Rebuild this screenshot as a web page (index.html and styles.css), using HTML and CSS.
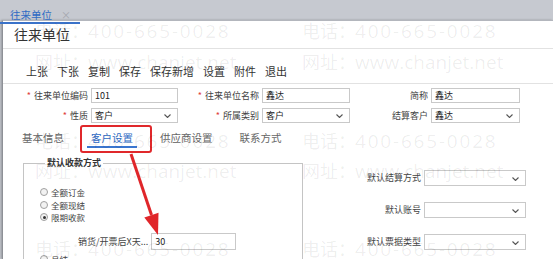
FILE: index.html
```html
<!DOCTYPE html>
<html lang="zh-CN">
<head>
  <meta charset="UTF-8" />
  <meta name="viewport" content="width=device-width, initial-scale=1.0"/>
  <title>往来单位</title>
  <link rel="stylesheet" href="styles.css">
</head>
<body>

  <!-- Top tab strip -->
  <div class="topbar">
    <div class="page-tab">往来单位<span class="close">×</span></div>
  </div>

  <!-- Dialog -->
  <div class="dialog">
    <div class="title">往来单位</div>

    <div class="toolbar">
      <span>上张</span>
      <span>下张</span>
      <span>复制</span>
      <span>保存</span>
      <span>保存新增</span>
      <span>设置</span>
      <span>附件</span>
      <span>退出</span>
    </div>

    <div class="form">
      <label class="lbl"><i>*</i>往来单位编码</label>
      <div class="input">101</div>
      <label class="lbl"><i>*</i>往来单位名称</label>
      <div class="input">鑫达</div>
      <label class="lbl">简称</label>
      <div class="input">鑫达</div>

      <label class="lbl"><i>*</i>性质</label>
      <div class="input select">客户<svg viewBox="0 0 7 4"><polyline points="0.5,0.5 3.5,3.5 6.5,0.5"/></svg></div>
      <label class="lbl"><i>*</i>所属类别</label>
      <div class="input select">客户<svg viewBox="0 0 7 4"><polyline points="0.5,0.5 3.5,3.5 6.5,0.5"/></svg></div>
      <label class="lbl">结算客户</label>
      <div class="input select">鑫达<svg viewBox="0 0 7 4"><polyline points="0.5,0.5 3.5,3.5 6.5,0.5"/></svg></div>
    </div>

    <div class="tabs">
      <span class="tab">基本信息</span>
      <span class="tab active">客户设置</span>
      <span class="tab">供应商设置</span>
      <span class="tab">联系方式</span>
    </div>

    <div class="panel">
      <fieldset class="group">
        <legend>默认收款方式</legend>
        <div class="radio"><span class="dot"></span>全额订金</div>
        <div class="radio"><span class="dot"></span>全额现结</div>
        <div class="radio"><span class="dot on"></span>限期收款</div>
        <div class="days">
          <span class="days-lbl">销货/开票后X天...</span>
          <div class="input">30</div>
        </div>
        <div class="radio"><span class="dot"></span>月结</div>
      </fieldset>

      <div class="defaults">
        <div class="row">
          <label class="lbl">默认结算方式</label>
          <div class="input select"><svg viewBox="0 0 7 4"><polyline points="0.5,0.5 3.5,3.5 6.5,0.5"/></svg></div>
        </div>
        <div class="row">
          <label class="lbl">默认账号</label>
          <div class="input select"><svg viewBox="0 0 7 4"><polyline points="0.5,0.5 3.5,3.5 6.5,0.5"/></svg></div>
        </div>
        <div class="row">
          <label class="lbl">默认票据类型</label>
          <div class="input select"><svg viewBox="0 0 7 4"><polyline points="0.5,0.5 3.5,3.5 6.5,0.5"/></svg></div>
        </div>
      </div>
    </div>
  </div>

  <!-- Annotation: red box + arrow -->
  <div class="mark-box"></div>
  <svg class="arrow" viewBox="0 0 553 259">
    <line x1="131" y1="154" x2="151.5" y2="215"/>
    <polygon points="158,235 144.3,217.5 158.5,212.7"/>
  </svg>

  <!-- Watermark -->
  <div class="watermark">
    <div class="wm" style="left:35px;top:18px"><span class="wm-k">电话：</span><span class="wm-v">400-665-0028</span></div>
    <div class="wm" style="left:302px;top:18px"><span class="wm-k">电话：</span><span class="wm-v">400-665-0028</span></div>
    <div class="wm" style="left:35px;top:49px"><span class="wm-k">网址：</span><span class="wm-u">www.chanjet.net</span></div>
    <div class="wm" style="left:302px;top:49px"><span class="wm-k">网址：</span><span class="wm-u">www.chanjet.net</span></div>
    <div class="wm" style="left:35px;top:128px"><span class="wm-k">电话：</span><span class="wm-v">400-665-0028</span></div>
    <div class="wm" style="left:302px;top:128px"><span class="wm-k">电话：</span><span class="wm-v">400-665-0028</span></div>
    <div class="wm" style="left:35px;top:158px"><span class="wm-k">网址：</span><span class="wm-u">www.chanjet.net</span></div>
    <div class="wm" style="left:302px;top:158px"><span class="wm-k">网址：</span><span class="wm-u">www.chanjet.net</span></div>
    <div class="wm" style="left:35px;top:236px"><span class="wm-k">电话：</span><span class="wm-v">400-665-0028</span></div>
    <div class="wm" style="left:302px;top:236px"><span class="wm-k">电话：</span><span class="wm-v">400-665-0028</span></div>
  </div>

</body>
</html>
```

FILE: styles.css
```css
body {
  margin: 0;
  width: 553px;
  height: 259px;
  overflow: hidden;
  position: relative;
  background: #c6c9d0;
  font-family: "Noto Sans CJK SC", "Noto Sans", sans-serif;
  color: #333;
}

/* top tab strip */
.topbar {
  height: 20px;
}
.page-tab {
  display: inline-flex;
  align-items: center;
  width: 70px;
  height: 15px;
  padding: 1px 0 0 10px;
  border-bottom: 2px solid #3a72c9;
  font-size: 10.5px;
  line-height: 15px;
  color: #2f6bc4;
}
.close {
  margin-left: 9px;
  font-size: 10px;
  color: #a3a6ad;
}

/* dialog */
.dialog {
  margin-left: 2px;
  height: 238px;
  background: #fff;
  border-top: 1px solid #b3b6bd;
  border-left: 1px solid #8e9197;
  box-shadow: -1px 0 2px rgba(0, 0, 0, 0.25);
}
.title {
  height: 27px;
  padding-left: 11px;
  font-size: 14px;
  line-height: 27px;
  color: #333;
  border-bottom: 1px solid #e2e2e2;
}
.toolbar {
  display: flex;
  gap: 9px;
  height: 22px;
  padding: 12px 0 0 23px;
  font-size: 11px;
  line-height: 20px;
  border-bottom: 1px solid #e2e2e2;
}

/* form rows */
.form {
  display: grid;
  grid-template-columns: 71px 87px 84px 88px 81px 89px;
  grid-auto-rows: 15px;
  row-gap: 5px;
  padding: 4px 0 0 17px;
}
.lbl {
  padding-right: 3px;
  text-align: right;
  font-size: 9px;
  line-height: 15px;
  color: #444;
  white-space: nowrap;
}
.lbl i {
  font-style: normal;
  color: #e03a3a;
  margin-right: 3px;
}
.input {
  position: relative;
  box-sizing: border-box;
  height: 15px;
  padding-left: 3px;
  border: 1px solid #c9c9c9;
  background: #fff;
  font-size: 9px;
  line-height: 13px;
  color: #222;
}
.select svg {
  position: absolute;
  right: 6px;
  top: 5px;
  width: 7px;
  height: 4px;
  fill: none;
  stroke: #555;
  stroke-width: 1.1;
}

/* tabs */
.tabs {
  display: flex;
  gap: 19px;
  padding: 7px 0 0 15px;
}
.tab {
  padding: 0 4px;
  font-size: 10.5px;
  line-height: 16px;
  color: #666;
  border-bottom: 2px solid transparent;
}
.tab.active {
  color: #2f6bc4;
  border-bottom-color: #3a76d0;
}

/* panel */
.panel {
  display: flex;
  align-items: flex-start;
  padding: 9px 0 0 20px;
}
.group {
  box-sizing: border-box;
  width: 280px;
  height: 120px;
  margin: 0;
  padding: 17px 0 0 16px;
  border: 1px solid #c4c4c4;
  min-width: 0;
}
.group legend {
  margin-left: 5px;
  padding: 0 2px;
  font-size: 9px;
  font-weight: bold;
  line-height: 12px;
  color: #333;
}
.radio {
  display: flex;
  align-items: center;
  gap: 3px;
  height: 12.5px;
  font-size: 8.5px;
  color: #444;
}
.dot {
  position: relative;
  box-sizing: border-box;
  width: 8px;
  height: 8px;
  border: 1px solid #a0a0a0;
  border-radius: 50%;
  background: #f2f2f2;
}
.dot.on::after {
  content: "";
  position: absolute;
  left: 1.5px;
  top: 1.5px;
  width: 3px;
  height: 3px;
  border-radius: 50%;
  background: #333;
}
.days {
  display: flex;
  align-items: center;
  height: 17px;
  margin: 9px 0 0 38px;
}
.days-lbl {
  font-size: 9px;
  color: #444;
  margin-right: 3px;
}
.days .input {
  width: 85px;
  height: 17px;
  line-height: 15px;
}
.group .radio:last-child {
  margin-top: 3px;
}

.defaults {
  display: flex;
  flex-direction: column;
  gap: 16px;
  margin-top: 13px;
}
.defaults .row {
  display: flex;
}
.defaults .lbl {
  width: 118px;
  line-height: 16px;
}
.defaults .input {
  width: 102px;
  height: 16px;
}
.defaults .select svg {
  top: 6px;
}

/* annotation */
.mark-box {
  position: absolute;
  left: 80px;
  top: 125px;
  width: 68px;
  height: 24px;
  border: 2px solid #e0282b;
  border-radius: 3px;
}
.arrow {
  position: absolute;
  left: 0;
  top: 0;
  width: 553px;
  height: 259px;
}
.arrow line {
  stroke: #e0262a;
  stroke-width: 3;
}
.arrow polygon {
  fill: #e0262a;
}

/* watermark */
.watermark {
  position: absolute;
  left: 0;
  top: 0;
  width: 553px;
  height: 259px;
  pointer-events: none;
  color: rgba(0, 0, 0, 0.07);
}
.wm {
  position: absolute;
  white-space: nowrap;
  line-height: 24px;
}
.wm-k {
  display: inline-block;
  width: 53px;
  font-size: 18px;
}
.wm-v {
  font-family: "Open Sans", sans-serif;
  font-size: 19px;
  letter-spacing: 1.8px;
}
.wm-u {
  font-family: "Open Sans", sans-serif;
  font-size: 19px;
}
```
